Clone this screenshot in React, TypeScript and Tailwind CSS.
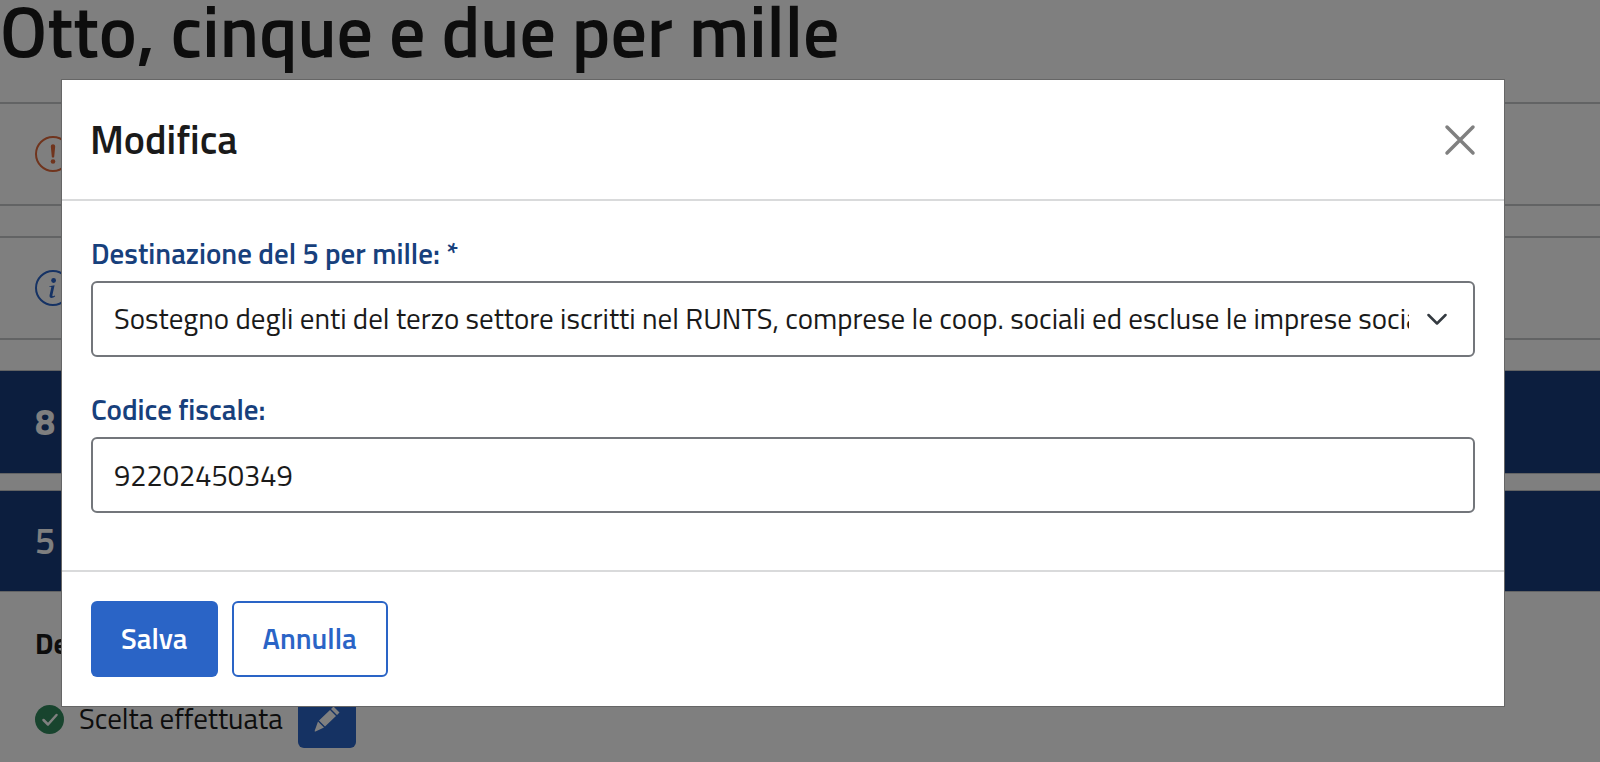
import { useState } from "react";

const destinations = [
  "Sostegno degli enti del terzo settore iscritti nel RUNTS, comprese le coop. sociali ed escluse le imprese sociali",
  "Finanziamento della ricerca scientifica e della università",
  "Finanziamento della ricerca sanitaria",
];

const WarningIcon = () => (
  <svg className="size-9 shrink-0" viewBox="0 0 36 36" fill="none" aria-hidden="true">
    <circle cx="18" cy="18" r="17" stroke="#e0693a" strokeWidth="2" />
    <path d="M15.800 10.500c0-3 4.400-3 4.400 0l-1 10.200c-.1 1.200-2.300 1.200-2.400 0z" fill="#e0693a" />
    <circle cx="18" cy="25.500" r="2.300" fill="#e0693a" />
  </svg>
);

const InfoIcon = () => (
  <svg className="size-9 shrink-0" viewBox="0 0 36 36" fill="none" aria-hidden="true">
    <circle cx="18" cy="18" r="17" stroke="#2a64c8" strokeWidth="2" />
    <circle cx="18.600" cy="10.500" r="2.400" fill="#2a64c8" />
    <path
      d="M14.200 16.200l5.400-1-2.200 9.800c-.3 1.600.8 1.800 2.400.6l.4.7c-2.700 2.600-6.400 2.300-5.600-1.300l1.700-7.400c.2-.8-.4-.9-2.100-.8z"
      fill="#2a64c8"
    />
  </svg>
);

const CheckIcon = () => (
  <svg className="size-[29px] shrink-0" viewBox="0 0 29 29" fill="none" aria-hidden="true">
    <circle cx="14.500" cy="14.500" r="14.500" fill="#31895c" />
    <path
      d="M8.500 15l4.500 4.500 8.500-9.500"
      stroke="#fff"
      strokeWidth="2.500"
      strokeLinecap="round"
      strokeLinejoin="round"
    />
  </svg>
);

const PencilIcon = () => (
  <svg className="size-7" viewBox="0 0 28 28" fill="#fff" aria-hidden="true">
    <path d="M20.500 1.500l6 6-2.500 2.500-6-6zM17 5l6 6-11 10.500-6-6zM5 16.500l6 6-8.500 4q-1 .3-.8-.8z" />
  </svg>
);

export default function App() {
  const [destination, setDestination] = useState(destinations[0]);
  const [taxCode, setTaxCode] = useState("92202450349");

  return (
    <div className="min-h-screen bg-white font-['Titillium_Web',Roboto,sans-serif] text-[#1a1a1a]">
      <main className="h-screen overflow-hidden">
        <h1 className="pb-[42px] text-[72px] leading-[60px] font-semibold">Otto, cinque e due per mille</h1>
        <div className="flex h-[104px] items-center border-y-2 border-[#c5c7c9] px-[35px]">
          <WarningIcon />
        </div>
        <div className="mt-[30px] flex h-[104px] items-center border-y-2 border-[#c5c7c9] px-[35px]">
          <InfoIcon />
        </div>
        <div className="mt-[30px] flex h-[104px] items-center border-y border-[#c5c7c9] bg-[#193d7d] px-[35px] text-[36px] font-bold text-white">
          8
        </div>
        <div className="mt-4 flex h-[102px] items-center border-y border-[#c5c7c9] bg-[#193d7d] px-[35px] text-[36px] font-semibold text-white">
          5
        </div>
        <div className="px-[35px] pt-[30px]">
          <h2 className="text-[29px] leading-[42px] font-bold">De</h2>
          <div className="mt-[26px] flex items-center gap-[15px]">
            <CheckIcon />
            <span className="text-[29px]">Scelta effettuata</span>
            <button
              type="button"
              aria-label="Modifica scelta"
              className="flex size-[58px] items-center justify-center rounded-md bg-[#2a64c6]"
            >
              <PencilIcon />
            </button>
          </div>
        </div>
      </main>

      <div className="fixed inset-0 overflow-hidden bg-black/50 pt-[79px] pr-[95px] pl-[61px]">
        <div role="dialog" aria-modal="true" aria-labelledby="modal-title" className="border border-[#666] bg-white">
          <div className="flex h-[121px] items-center justify-between border-b-2 border-[#d9dadb] px-7">
            <h2 id="modal-title" className="text-[40px] font-semibold">Modifica</h2>
            <button type="button" aria-label="Chiudi">
              <svg className="size-8" viewBox="0 0 32 32" stroke="#808080" strokeWidth="3.500" strokeLinecap="round">
                <path d="M3 3l26 26M29 3L3 29" />
              </svg>
            </button>
          </div>

          <div className="px-[29px] pt-8 pb-[57px]">
            <label htmlFor="destination" className="block pb-2 text-[29px] leading-10 font-semibold text-[#17407c]">
              Destinazione del 5 per mille: *
            </label>
            <div className="relative">
              <select
                id="destination"
                value={destination}
                onChange={(e) => setDestination(e.target.value)}
                className="h-[76px] w-full appearance-none rounded-md border-2 border-[#73767b] bg-white pr-16 pl-[21px] text-[29px]"
              >
                {destinations.map((item) => (
                  <option key={item}>{item}</option>
                ))}
              </select>
              <svg
                className="pointer-events-none absolute top-7 right-7 size-5"
                viewBox="0 0 20 20"
                fill="none"
                stroke="#343a40"
                strokeWidth="2.500"
                strokeLinecap="round"
                strokeLinejoin="round"
              >
                <path d="M1.500 6l8.500 8.500L18.500 6" />
              </svg>
            </div>

            <label htmlFor="tax-code" className="mt-8 block pb-2 text-[29px] leading-10 font-semibold text-[#17407c]">
              Codice fiscale:
            </label>
            <input
              id="tax-code"
              type="text"
              value={taxCode}
              onChange={(e) => setTaxCode(e.target.value)}
              className="block h-[76px] w-full rounded-md border-2 border-[#73767b] bg-white px-[21px] text-[29px]"
            />
          </div>

          <div className="flex gap-[14px] border-t-2 border-[#d9dadb] px-[29px] py-[29px]">
            <button type="button" className="h-[76px] rounded-md bg-[#2a64c6] px-[30px] text-[29px] font-semibold text-white">
              Salva
            </button>
            <button
              type="button"
              className="h-[76px] rounded-md border-2 border-[#2a64c6] bg-white px-[29px] text-[29px] font-semibold text-[#2a64c6]"
            >
              Annulla
            </button>
          </div>
        </div>
      </div>
    </div>
  );
}
